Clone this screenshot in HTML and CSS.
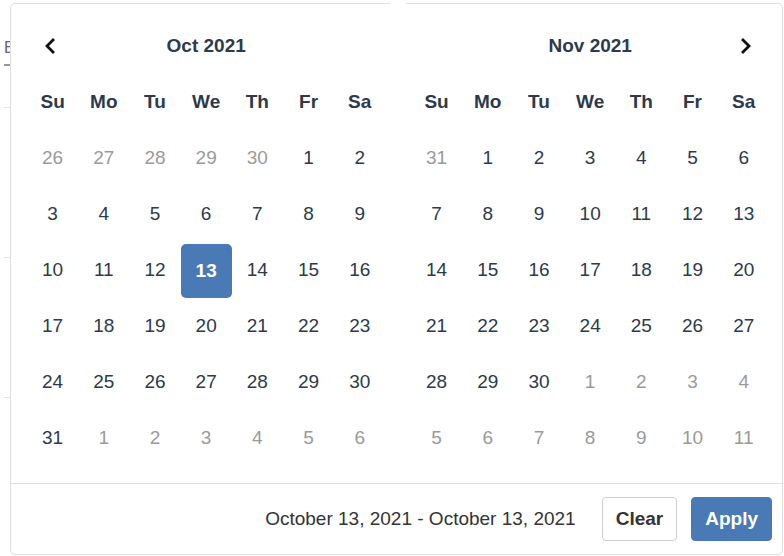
FILE: index.html
```html
<!DOCTYPE html>
<html>
<head>
<meta charset="utf-8">
<link rel="stylesheet" href="styles.css">
</head>
<body>
<div class="page">
  <div class="bg-label">E</div>
  <div class="bg-dash"></div>
  <div class="bg-line l1"></div>
  <div class="bg-line l2"></div>
  <div class="bg-line l3"></div>
</div>
<div class="picker">
  <div class="notch"></div>
  <div class="calendars">
    <div class="cal">
      <div class="head">
        <span class="nav"><svg width="12" height="16" viewBox="0 0 12 16"><path d="M9 2 L3 8 L9 14" fill="none" stroke="#111" stroke-width="2.8" stroke-linecap="square"/></svg></span>
        <span class="title">Oct 2021</span>
        <span></span>
      </div>
      <div class="grid">
        <span class="wd">Su</span><span class="wd">Mo</span><span class="wd">Tu</span><span class="wd">We</span><span class="wd">Th</span><span class="wd">Fr</span><span class="wd">Sa</span>
        <span class="off">26</span><span class="off">27</span><span class="off">28</span><span class="off">29</span><span class="off">30</span><span>1</span><span>2</span>
        <span>3</span><span>4</span><span>5</span><span>6</span><span>7</span><span>8</span><span>9</span>
        <span>10</span><span>11</span><span>12</span><span class="sel">13</span><span>14</span><span>15</span><span>16</span>
        <span>17</span><span>18</span><span>19</span><span>20</span><span>21</span><span>22</span><span>23</span>
        <span>24</span><span>25</span><span>26</span><span>27</span><span>28</span><span>29</span><span>30</span>
        <span>31</span><span class="off">1</span><span class="off">2</span><span class="off">3</span><span class="off">4</span><span class="off">5</span><span class="off">6</span>
      </div>
    </div>
    <div class="cal">
      <div class="head">
        <span></span>
        <span class="title">Nov 2021</span>
        <span class="nav"><svg width="12" height="16" viewBox="0 0 12 16"><path d="M3 2 L9 8 L3 14" fill="none" stroke="#111" stroke-width="2.8" stroke-linecap="square"/></svg></span>
      </div>
      <div class="grid">
        <span class="wd">Su</span><span class="wd">Mo</span><span class="wd">Tu</span><span class="wd">We</span><span class="wd">Th</span><span class="wd">Fr</span><span class="wd">Sa</span>
        <span class="off">31</span><span>1</span><span>2</span><span>3</span><span>4</span><span>5</span><span>6</span>
        <span>7</span><span>8</span><span>9</span><span>10</span><span>11</span><span>12</span><span>13</span>
        <span>14</span><span>15</span><span>16</span><span>17</span><span>18</span><span>19</span><span>20</span>
        <span>21</span><span>22</span><span>23</span><span>24</span><span>25</span><span>26</span><span>27</span>
        <span>28</span><span>29</span><span>30</span><span class="off">1</span><span class="off">2</span><span class="off">3</span><span class="off">4</span>
        <span class="off">5</span><span class="off">6</span><span class="off">7</span><span class="off">8</span><span class="off">9</span><span class="off">10</span><span class="off">11</span>
      </div>
    </div>
  </div>
  <div class="footer">
    <span class="range">October 13, 2021 - October 13, 2021</span>
    <button class="btn clear">Clear</button>
    <button class="btn apply">Apply</button>
  </div>
</div>
</body>
</html>
```
FILE: styles.css
```css
* { box-sizing: border-box; }
html, body { margin: 0; padding: 0; background: #fff; }
body {
  width: 784px;
  height: 556px;
  overflow: hidden;
  position: relative;
  font-family: "Liberation Sans", Arial, sans-serif;
  color: #2c3a4b;
}
.page {
  padding: 40px 0 0 4px;
  display: flex;
  flex-direction: column;
}
.bg-label {
  font-size: 16px;
  color: #666;
  line-height: 16px;
}
.bg-dash {
  width: 6px;
  height: 2px;
  background: #999;
  margin-top: 8px;
}
.bg-line {
  width: 6px;
  height: 1px;
  background: #e4e4e4;
}
.bg-line.l1 { margin-top: 41px; }
.bg-line.l2 { margin-top: 149px; }
.bg-line.l3 { margin-top: 139px; }

.picker {
  position: absolute;
  left: 10px;
  top: 3px;
  width: 773px;
  height: 552px;
  background: #fff;
  border: 1px solid #dedede;
  border-radius: 5px;
  display: flex;
  flex-direction: column;
}
.notch {
  position: absolute;
  top: -1px;
  left: 379px;
  width: 16px;
  height: 3px;
  background: #fff;
}
.calendars {
  display: flex;
  gap: 25.6px;
  padding: 14px 0 17px 16px;
  border-bottom: 1px solid #dedede;
}
.cal {
  width: 358.4px;
  display: flex;
  flex-direction: column;
}
.head {
  display: grid;
  grid-template-columns: 51.2px 1fr 51.2px;
  height: 56px;
  align-items: center;
}
.nav {
  display: flex;
  justify-content: center;
  padding-right: 6px;
}
.cal:last-child .nav { padding-right: 0; padding-left: 4px; }
.title {
  text-align: center;
  font-weight: bold;
  font-size: 19px;
  color: #2c3a4b;
}
.grid {
  display: grid;
  grid-template-columns: repeat(7, 51.2px);
  grid-auto-rows: 56px;
  font-size: 19px;
}
.grid span {
  display: flex;
  align-items: center;
  justify-content: center;
}
.grid .wd { font-weight: bold; }
.grid .off { color: #9a9a9a; }
.grid .sel {
  background: #4a7ab6;
  color: #fff;
  font-weight: bold;
  border-radius: 5px;
  margin: 2px 0 0 0;
}
.footer {
  flex: 1;
  display: flex;
  align-items: center;
  justify-content: flex-end;
  padding: 0 10px 0 0;
}
.range {
  font-size: 19px;
  color: #333;
  margin-right: 26px;
}
.btn {
  font-family: "Liberation Sans", Arial, sans-serif;
  font-weight: bold;
  font-size: 19px;
  height: 44px;
  border-radius: 4px;
  padding: 0 13px;
  cursor: pointer;
}
.clear {
  background: #fff;
  border: 1px solid #cfcfcf;
  color: #333;
  margin-right: 14px;
}
.apply {
  background: #4a7ab6;
  border: 1px solid #4a7ab6;
  color: #fff;
}
```
